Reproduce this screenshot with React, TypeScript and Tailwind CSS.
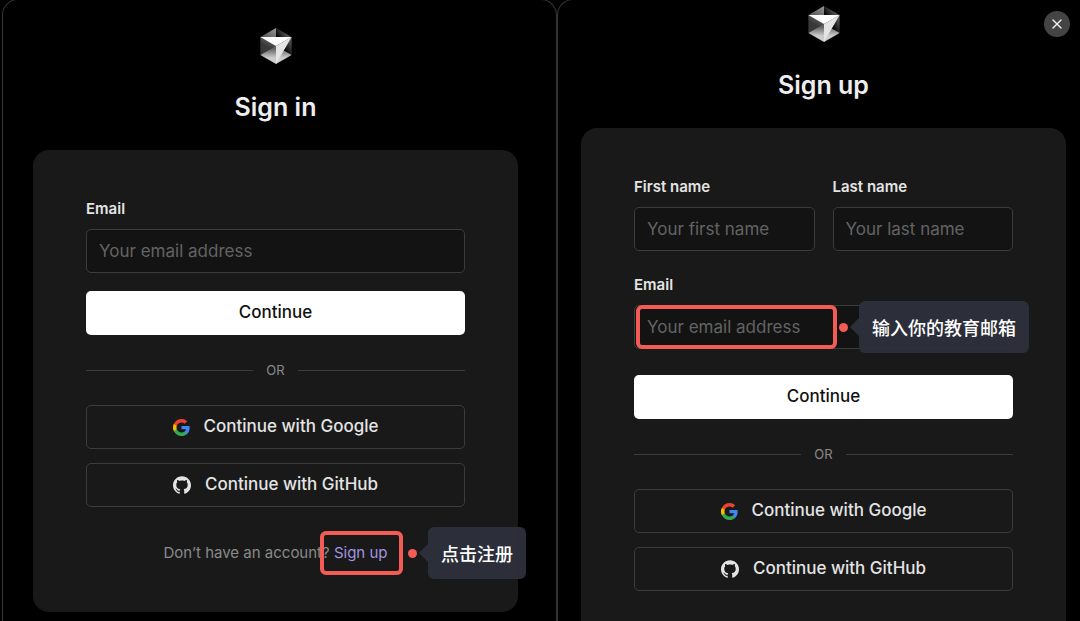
import { X } from "lucide-react"
import type { ComponentProps, ReactNode } from "react"
import { SiGithub } from "react-icons/si"

function CursorLogo({ id }: { id: string }) {
  return (
    <svg viewBox="1.5 0 20.85 24" className="mx-auto h-9 w-8" aria-hidden="true">
      <defs>
        <linearGradient id={`${id}-bottom`} gradientUnits="userSpaceOnUse" x1="11.925" x2="11.925" y1="12" y2="24">
          <stop offset=".16" stopColor="#fff" stopOpacity=".39" />
          <stop offset=".658" stopColor="#fff" stopOpacity=".8" />
        </linearGradient>
        <linearGradient id={`${id}-right`} gradientUnits="userSpaceOnUse" x1="22.35" x2="11.925" y1="6.037" y2="12.15">
          <stop offset=".182" stopColor="#fff" stopOpacity=".31" />
          <stop offset=".715" stopColor="#fff" stopOpacity="0" />
        </linearGradient>
        <linearGradient id={`${id}-left`} gradientUnits="userSpaceOnUse" x1="11.925" x2="1.5" y1="0" y2="18">
          <stop stopColor="#fff" stopOpacity=".6" />
          <stop offset=".667" stopColor="#fff" stopOpacity=".22" />
        </linearGradient>
      </defs>
      <path d="M11.925 24l10.425-6-10.425-6L1.5 18l10.425 6z" fill={`url(#${id}-bottom)`} />
      <path d="M22.35 18V6L11.925 0v12l10.425 6z" fill={`url(#${id}-right)`} />
      <path d="M11.925 0L1.5 6v12l10.425-6V0z" fill={`url(#${id}-left)`} />
      <path d="M22.35 6L11.925 24V12L22.35 6z" fill="#e4e4e4" />
      <path d="M22.35 6l-10.425 6L1.5 6h20.85z" fill="#fff" />
    </svg>
  )
}

function GoogleIcon() {
  return (
    <svg viewBox="0 0 24 24" className="size-[17px]" aria-hidden="true">
      <path fill="#4285F4" d="M23.5 12.27c0-.85-.08-1.67-.22-2.45H12v4.64h6.45a5.52 5.52 0 0 1-2.39 3.62v3h3.87c2.26-2.09 3.57-5.16 3.57-8.81z" />
      <path fill="#34A853" d="M12 24c3.24 0 5.95-1.07 7.93-2.91l-3.87-3c-1.07.72-2.45 1.14-4.06 1.14-3.12 0-5.77-2.11-6.71-4.95h-4v3.1A12 12 0 0 0 12 24z" />
      <path fill="#FBBC05" d="M5.29 14.28a7.2 7.2 0 0 1 0-4.56v-3.1h-4a12 12 0 0 0 0 10.76l4-3.1z" />
      <path fill="#EA4335" d="M12 4.77c1.76 0 3.34.6 4.59 1.79l3.43-3.43A11.5 11.5 0 0 0 12 0 12 12 0 0 0 1.29 6.62l4 3.1C6.23 6.88 8.88 4.77 12 4.77z" />
    </svg>
  )
}

interface FieldProps extends ComponentProps<"input"> {
  id: string
  label: string
  children?: ReactNode
}

function Field({ id, label, children, ...props }: FieldProps) {
  return (
    <div className="flex min-w-0 flex-1 flex-col gap-[10px]">
      <label htmlFor={id} className="text-[15px] leading-5 font-semibold text-[#e4e4e4]">
        {label}
      </label>
      <div className="relative">
        <input
          id={id}
          className="block h-11 w-full rounded-[5px] border border-[#3c3c3c] bg-[#131313] px-3 text-[17px] text-[#eeeeee] outline-none placeholder:text-[#636363]"
          {...props}
        />
        {children}
      </div>
    </div>
  )
}

function ContinueButton() {
  return (
    <button type="submit" className="h-11 w-full rounded-[5px] bg-white text-[17px] font-medium text-[#111111]">
      Continue
    </button>
  )
}

function SocialButtons() {
  return (
    <>
      <div className="my-[25px] flex items-center gap-[13px] text-[13px] leading-5 text-[#8a8a8a]">
        <span className="h-px flex-1 bg-[#3c3c3c]" />
        OR
        <span className="h-px flex-1 bg-[#3c3c3c]" />
      </div>
      <div className="flex flex-col gap-[14px] text-[17px] font-medium text-[#e4e4e4]">
        <button type="button" className="flex h-11 items-center justify-center gap-[14px] rounded-[5px] border border-[#3c3c3c]">
          <GoogleIcon />
          Continue with Google
        </button>
        <button type="button" className="flex h-11 items-center justify-center gap-[14px] rounded-[5px] border border-[#3c3c3c]">
          <SiGithub className="size-[18px]" aria-hidden="true" />
          Continue with GitHub
        </button>
      </div>
    </>
  )
}

// dot and speech bubble that sit to the right of a highlighted element
function Hint({ children }: { children: ReactNode }) {
  return (
    <span className="flex items-center whitespace-nowrap">
      <span className="size-[9px] rounded-full bg-[#f25c54]" />
      <span className="ml-[2px] border-y-[9px] border-r-[9px] border-y-transparent border-r-[#2d303c]/95" />
      <span className="rounded-md bg-[#2d303c]/95 px-[13px] py-3 font-['Noto_Sans_CJK_SC',sans-serif] text-lg leading-7 font-medium text-white">
        {children}
      </span>
    </span>
  )
}

function SignIn() {
  return (
    <section className="relative -mt-px ml-[2px] rounded-t-2xl border-x border-t border-[#333333] pt-7 pr-[38px] pl-[30px]">
      <CursorLogo id="signin" />
      <h1 className="mt-[27px] text-center text-[25px] leading-8 font-semibold text-[#eeeeee]">Sign in</h1>
      <div className="mt-[27px] rounded-2xl bg-[#191919] px-[53px] py-[49px]">
        <form className="flex flex-col gap-[18px]">
          <Field id="signin-email" label="Email" type="email" placeholder="Your email address" />
          <ContinueButton />
        </form>
        <SocialButtons />
        <p className="mt-9 text-center text-[15px] leading-5 text-[#8a8a8a]">
          Don’t have an account?{" "}
          <span className="relative inline-block">
            <a href="#signup" className="text-[#a394e0]">
              Sign up
            </a>
            <span className="pointer-events-none absolute -top-4 -left-[14px] flex items-center gap-[5px]">
              <span className="h-11 w-[83px] rounded-md border-4 border-[#f25c54]" />
              <Hint>点击注册</Hint>
            </span>
          </span>
        </p>
      </div>
    </section>
  )
}

function SignUp() {
  return (
    <section id="signup" className="relative -mt-px rounded-tl-2xl border-t border-l border-[#333333] pt-[6px] pr-[14px] pl-[23px]">
      <button
        type="button"
        aria-label="Close"
        className="absolute top-[11px] right-[10px] flex size-[26px] items-center justify-center rounded-full bg-[#444444] text-[#eeeeee]"
      >
        <X className="size-4" />
      </button>
      <CursorLogo id="signup" />
      <h1 className="mt-[27px] text-center text-[25px] leading-8 font-semibold text-[#eeeeee]">Sign up</h1>
      <div className="mt-[27px] rounded-t-2xl bg-[#191919] px-[53px] py-[49px]">
        <form className="flex flex-col gap-[26px]">
          <div className="flex flex-col gap-6">
            <div className="flex gap-[18px]">
              <Field id="first-name" label="First name" placeholder="Your first name" />
              <Field id="last-name" label="Last name" placeholder="Your last name" />
            </div>
            <Field id="signup-email" label="Email" type="email" placeholder="Your email address">
              <span className="pointer-events-none absolute -top-1 left-[2px] flex items-center gap-[2px]">
                <span className="h-11 w-[201px] rounded-md border-4 border-[#f25c54]" />
                <Hint>输入你的教育邮箱</Hint>
              </span>
            </Field>
          </div>
          <ContinueButton />
        </form>
        <SocialButtons />
      </div>
    </section>
  )
}

export default function App() {
  return (
    <main className="grid h-screen grid-cols-[557fr_523fr] overflow-hidden bg-black font-[Inter,sans-serif]">
      <SignIn />
      <SignUp />
    </main>
  )
}
